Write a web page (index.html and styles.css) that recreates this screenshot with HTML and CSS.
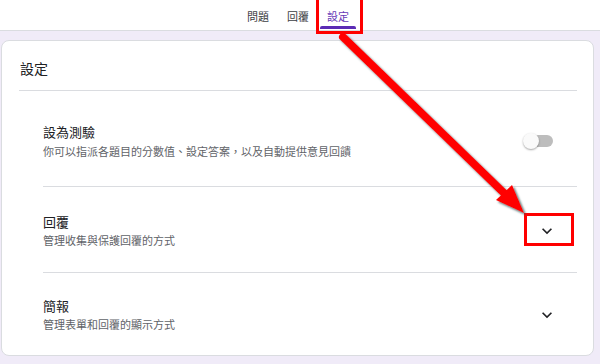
FILE: index.html
```html
<!DOCTYPE html>
<html lang="zh-Hant">
<head>
    <meta charset="UTF-8">
    <meta name="viewport" content="width=device-width, initial-scale=1.0">
    <title>設定</title>
    <link rel="stylesheet" href="styles.css">
</head>
<body>
    <div class="topbar">
        <div class="tab">問題</div>
        <div class="tab">回覆</div>
        <div class="tab active">設定</div>
    </div>

    <div class="card">
        <div class="card-head">設定</div>
        <div class="list">
            <div class="item first">
                <div class="item-text">
                    <div class="item-title">設為測驗</div>
                    <div class="item-desc">你可以指派各題目的分數值、設定答案，以及自動提供意見回饋</div>
                </div>
                <div class="toggle"><span class="thumb"></span></div>
            </div>
            <div class="item second">
                <div class="item-text">
                    <div class="item-title">回覆</div>
                    <div class="item-desc">管理收集與保護回覆的方式</div>
                </div>
                <svg class="chevron" viewBox="0 0 24 24"><path d="M16.59 8.59L12 13.17 7.41 8.59 6 10l6 6 6-6z"/></svg>
            </div>
            <div class="item third">
                <div class="item-text">
                    <div class="item-title">簡報</div>
                    <div class="item-desc">管理表單和回覆的顯示方式</div>
                </div>
                <svg class="chevron" viewBox="0 0 24 24"><path d="M16.59 8.59L12 13.17 7.41 8.59 6 10l6 6 6-6z"/></svg>
            </div>
        </div>
    </div>

    <!-- annotations drawn over the screenshot -->
    <div class="mark mark-tab"></div>
    <div class="mark mark-chevron"></div>
    <svg class="arrow" viewBox="0 0 600 364" width="600" height="364">
        <defs>
            <filter id="shadow" x="-20%" y="-20%" width="140%" height="140%">
                <feDropShadow dx="2" dy="2" stdDeviation="1" flood-color="#2f4f4f" flood-opacity="0.8"/>
            </filter>
        </defs>
        <g filter="url(#shadow)" fill="#ff0000">
            <line x1="343" y1="37" x2="506" y2="195" stroke="#ff0000" stroke-width="8" stroke-linecap="round"/>
            <polygon points="524,213 496,200 512,185"/>
        </g>
    </svg>
</body>
</html>
```

FILE: styles.css
```css
body {
    margin: 0;
    width: 600px;
    height: 364px;
    overflow: hidden;
    position: relative;
    background-color: #f0ebf8;
    font-family: "Noto Sans CJK TC", "Noto Sans", sans-serif;
    color: #202124;
}
.topbar {
    height: 30px;
    background-color: #ffffff;
    border-bottom: 1px solid #dadce0;
    display: flex;
    justify-content: center;
    gap: 4px;
    padding-right: 4px;
}
.tab {
    position: relative;
    padding: 0 7px;
    font-size: 11px;
    line-height: 32px;
    color: #3c4043;
}
.tab.active {
    color: #673ab7;
}
.tab.active::after {
    content: "";
    position: absolute;
    left: 0;
    right: 0;
    bottom: 1px;
    height: 3px;
    background-color: #5b2bb5;
    border-radius: 2px 2px 0 0;
}
.card {
    margin: 9px 6px 0 1px;
    background-color: #ffffff;
    border: 1px solid #dadce0;
    border-radius: 8px;
}
.card-head {
    margin: 0 16px 0 17px;
    padding: 19px 0 14px 1px;
    font-size: 14px;
    line-height: 16px;
    border-bottom: 1px solid #dadce0;
}
.list {
    margin: 0 16px 0 41px;
}
.item {
    display: flex;
    align-items: center;
    justify-content: space-between;
    border-top: 1px solid #dadce0;
    padding: 24px 0 23px;
}
.item.first {
    border-top: none;
    padding: 32px 0 27px;
}
.item.second {
    padding: 26px 0 24px;
}
.item-title {
    font-size: 13px;
    line-height: 18px;
}
.item-desc {
    margin-top: 1px;
    font-size: 11px;
    line-height: 16px;
    color: #5f6368;
}
.item.first .item-desc {
    margin-top: 2px;
}
.toggle {
    position: relative;
    width: 30px;
    height: 16px;
    margin-right: 24px;
}
.toggle::before {
    content: "";
    position: absolute;
    left: 6px;
    right: 0;
    top: 2px;
    height: 12px;
    border-radius: 6px;
    background-color: #bdbdbd;
}
.thumb {
    position: absolute;
    left: 0;
    top: 0;
    width: 16px;
    height: 16px;
    border-radius: 50%;
    background-color: #fafafa;
    box-shadow: 0 1px 2px rgba(0, 0, 0, 0.35);
}
.chevron {
    width: 20px;
    height: 20px;
    margin-right: 20px;
    fill: #202124;
}
.mark {
    position: absolute;
    border: 3px solid #ff0000;
    box-sizing: border-box;
}
.mark-tab {
    left: 316px;
    top: -3px;
    width: 47px;
    height: 37px;
}
.mark-chevron {
    left: 524px;
    top: 213px;
    width: 50px;
    height: 33px;
}
.arrow {
    position: absolute;
    left: 0;
    top: 0;
    pointer-events: none;
}
```
